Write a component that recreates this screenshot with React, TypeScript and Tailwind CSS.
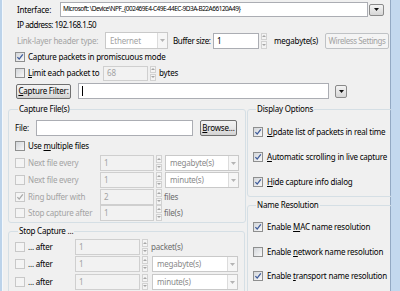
import type { ReactNode } from "react"

function Check({ checked, disabled }: { checked?: boolean; disabled?: boolean }) {
  return (
    <span
      className={`w-[10px] h-[10px] shrink-0 border flex items-center justify-center ${
        disabled
          ? "border-[#c8c8c8] bg-[#f4f4f4]"
          : "border-[#8e8f8f] bg-gradient-to-br from-[#d3d6da] to-[#f8f8f8]"
      }`}
    >
      {checked && (
        <svg width="8" height="8" viewBox="0 0 8 8">
          <path
            d="M1.4 4.1 L3.2 6.1 L6.8 1.3"
            fill="none"
            stroke={disabled ? "#a9a9a9" : "#3d5b9b"}
            strokeWidth="1.3"
          />
        </svg>
      )}
    </span>
  )
}

function CheckRow({
  checked,
  disabled,
  children,
  gap = "gap-[3px]",
}: {
  checked?: boolean
  disabled?: boolean
  children: ReactNode
  gap?: string
}) {
  return (
    <span className={`flex items-center ${gap} ${disabled ? "text-[#a3a3a3]" : ""}`}>
      <Check checked={checked} disabled={disabled} />
      <span className="whitespace-nowrap">{children}</span>
    </span>
  )
}

function U({ children }: { children: ReactNode }) {
  return <span className="underline underline-offset-[1px]">{children}</span>
}

function Arrows() {
  return (
    <span className="ml-[2px] w-[6px] h-full flex flex-col gap-[1px]">
      <span className="flex-1 border border-[#d2d2d2] bg-[#f4f4f4] flex items-center justify-center">
        <svg width="4" height="2" viewBox="0 0 4 2">
          <path d="M0 2 L2 0 L4 2Z" fill="#a6a6a6" />
        </svg>
      </span>
      <span className="flex-1 border border-[#d2d2d2] bg-[#f4f4f4] flex items-center justify-center">
        <svg width="4" height="2" viewBox="0 0 4 2">
          <path d="M0 0 L2 2 L4 0Z" fill="#a6a6a6" />
        </svg>
      </span>
    </span>
  )
}

function Spin({
  value,
  disabled,
  w,
}: {
  value: string
  disabled?: boolean
  w: string
}) {
  return (
    <span className="flex h-full items-stretch">
      <span
        className={`${w} h-full border pl-[3px] flex items-center ${
          disabled
            ? "border-[#cfcfcf] bg-[#f2f2f2] text-[#a3a3a3]"
            : "border-[#abadb3] bg-white"
        }`}
      >
        {value}
      </span>
      <Arrows />
    </span>
  )
}

function Combo({ value, w, disabled }: { value: string; w: string; disabled?: boolean }) {
  return (
    <span
      className={`${w} h-full border border-[#c9c9c9] bg-white flex items-stretch ${
        disabled ? "text-[#a3a3a3]" : "text-[#8a8a8a]"
      }`}
    >
      <span className="flex-1 pl-[4px] flex items-center whitespace-nowrap">{value}</span>
      <span className="w-[10px] border-l border-[#dcdcdc] bg-[#f6f6f6] flex items-center justify-center">
        <svg width="5" height="3" viewBox="0 0 5 3">
          <path d="M0 0 L2.5 3 L5 0Z" fill="#b4b4b4" />
        </svg>
      </span>
    </span>
  )
}

function DropButton({ className }: { className: string }) {
  return (
    <span
      className={`${className} border border-[#8a8a8a] rounded-[2px] bg-gradient-to-b from-[#f4f4f4] to-[#d6d6d6] flex items-center justify-center`}
    >
      <svg width="5" height="3" viewBox="0 0 5 3">
        <path d="M0 0 L2.5 3 L5 0Z" fill="#111" />
      </svg>
    </span>
  )
}

function Button({ children, className }: { children: ReactNode; className: string }) {
  return (
    <span
      className={`${className} border border-[#707070] rounded-[2px] bg-gradient-to-b from-[#f3f3f3] via-[#e8e8e8] to-[#d2d2d2] flex items-center justify-center whitespace-nowrap`}
    >
      {children}
    </span>
  )
}

function Group({
  title,
  className,
  children,
}: {
  title: string
  className: string
  children: ReactNode
}) {
  return (
    <fieldset className={`${className} border border-[#d5dfe5] rounded-[3px] shrink-0`}>
      <legend className="ml-[3px] px-[1px] leading-[12px] h-[12px]">{title}</legend>
      {children}
    </fieldset>
  )
}

export default function App() {
  return (
    <div className="w-[400px] h-[291px] overflow-hidden flex bg-[#c3d8ee] font-['Noto_Sans',sans-serif] text-[8px] tracking-[-0.2px] text-black leading-none">
      <div className="w-[3px] shrink-0 bg-[#bcd3ea] border-r border-[#f4f8fc]" />

      <div className="w-[388px] shrink-0 bg-[#f0f0f0] border-r border-[#93a9c3]">
        {/* Interface */}
        <div className="mt-[2px] h-[15px] flex items-center pl-[14px]">
          <span className="w-[43px]">Interface:</span>
          <span className="w-[308px] h-full border border-[#abadb3] bg-white pl-[2px] flex items-center whitespace-nowrap overflow-hidden text-[6.5px] tracking-[-0.5px]">
            Microsoft: \Device\NPF_{"{"}002469E4-C49E-44EC-9D3A-B22A66120A49{"}"}
          </span>
          <DropButton className="ml-[1px] w-[15px] h-[12px]" />
        </div>

        <div className="h-[15px] flex items-center pl-[14px] tracking-[-0.5px]">
          IP address: 192.168.1.50
        </div>

        {/* Link-layer / buffer */}
        <div className="h-[17px] flex items-center pl-[14px]">
          <span className="w-[88px] text-[#a3a3a3] whitespace-nowrap">Link-layer header type:</span>
          <span className="h-[17px]">
            <Combo value="Ethernet" w="w-[63px]" disabled />
          </span>
          <span className="ml-[5px] w-[40px] whitespace-nowrap tracking-[-0.35px]">Buffer size:</span>
          <span className="h-[16px]">
            <Spin value="1" w="w-[46px]" />
          </span>
          <span className="ml-[7px] w-[51px] whitespace-nowrap">megabyte(s)</span>
          <span className="w-[64px] h-[16px] border border-[#bfc2c5] rounded-[2px] bg-[#f4f4f4] text-[#a3a3a3] flex items-center justify-center whitespace-nowrap tracking-[-0.4px]">
            Wireless Settings
          </span>
        </div>

        <div className="h-[16px] flex items-center pl-[12px]">
          <CheckRow checked>Capture packets in promiscuous mode</CheckRow>
        </div>

        <div className="h-[16px] flex items-center pl-[12px]">
          <span className="w-[88px]">
            <CheckRow>
              <U>L</U>imit each packet to
            </CheckRow>
          </span>
          <span className="h-[15px]">
            <Spin value="68" w="w-[45px]" disabled />
          </span>
          <span className="ml-[3px]">bytes</span>
        </div>

        {/* Capture filter */}
        <div className="mt-[2px] h-[16px] flex items-center pl-[13px]">
          <Button className="w-[55px] h-[15px]">
            <U>C</U>apture Filter:
          </Button>
          <span className="ml-[7px] w-[251px] h-full border border-[#abadb3] bg-white flex items-center pl-[3px]">
            <span className="w-px h-[10px] bg-black" />
          </span>
          <DropButton className="ml-[6px] w-[12px] h-[13px]" />
        </div>

        {/* Groups */}
        <div className="mt-[4px] pl-[5px] flex gap-[4px]">
          <div className="w-[235px] flex flex-col">
            <Group title="Capture File(s)" className="h-[120px] px-[6px]">
              <div className="mt-[5px] h-[16px] flex items-center">
                <span className="w-[21px]">File:</span>
                <span className="w-[157px] h-full border border-[#abadb3] bg-white" />
                <Button className="ml-[7px] w-[37px] h-[16px]">
                  <U>B</U>rowse...
                </Button>
              </div>
              <div className="mt-[2px] h-[16px] flex items-center">
                <CheckRow>
                  Use <U>m</U>ultiple files
                </CheckRow>
              </div>
              <div className="mt-[1px] h-[16px] flex items-center">
                <span className="w-[85px]">
                  <CheckRow disabled>Next file every</CheckRow>
                </span>
                <Spin value="1" w="w-[54px]" disabled />
                <span className="ml-[3px] h-full">
                  <Combo value="megabyte(s)" w="w-[74px]" />
                </span>
              </div>
              <div className="mt-[1px] h-[16px] flex items-center">
                <span className="w-[85px]">
                  <CheckRow disabled>Next file every</CheckRow>
                </span>
                <Spin value="1" w="w-[54px]" disabled />
                <span className="ml-[3px] h-full">
                  <Combo value="minute(s)" w="w-[74px]" />
                </span>
              </div>
              <div className="mt-[1px] h-[16px] flex items-center">
                <span className="w-[85px]">
                  <CheckRow checked disabled>
                    Ring buffer with
                  </CheckRow>
                </span>
                <Spin value="2" w="w-[54px]" disabled />
                <span className="ml-[2px] text-[#6d6d6d]">files</span>
              </div>
              <div className="h-[16px] flex items-center">
                <span className="w-[85px]">
                  <CheckRow disabled>Stop capture after</CheckRow>
                </span>
                <Spin value="1" w="w-[54px]" disabled />
                <span className="ml-[2px] text-[#6d6d6d]">file(s)</span>
              </div>
            </Group>

            <Group title="Stop Capture ..." className="mt-[2px] h-[90px] px-[6px]">
              <div className="mt-[2px] h-[16px] flex items-center">
                <span className="w-[60px]">
                  <CheckRow disabled>
                    <span className="text-black">... after</span>
                  </CheckRow>
                </span>
                <Spin value="1" w="w-[65px]" disabled />
                <span className="ml-[3px] text-[#6d6d6d]">packet(s)</span>
              </div>
              <div className="mt-[1px] h-[16px] flex items-center">
                <span className="w-[60px]">
                  <CheckRow disabled>
                    <span className="text-black">... after</span>
                  </CheckRow>
                </span>
                <Spin value="1" w="w-[65px]" disabled />
                <span className="ml-[4px] h-full">
                  <Combo value="megabyte(s)" w="w-[86px]" />
                </span>
              </div>
              <div className="mt-[2px] h-[16px] flex items-center">
                <span className="w-[60px]">
                  <CheckRow disabled>
                    <span className="text-black">... after</span>
                  </CheckRow>
                </span>
                <Spin value="1" w="w-[65px]" disabled />
                <span className="ml-[4px] h-full">
                  <Combo value="minute(s)" w="w-[86px]" />
                </span>
              </div>
            </Group>
          </div>

          <div className="w-[143px] flex flex-col">
            <Group title="Display Options" className="h-[94px] px-[5px]">
              <div className="mt-[9px] h-[16px] flex items-center">
                <CheckRow checked gap="gap-[4px]">
                  <U>U</U>pdate list of packets in real time
                </CheckRow>
              </div>
              <div className="mt-[9px] h-[16px] flex items-center">
                <CheckRow checked gap="gap-[4px]">
                  <U>A</U>utomatic scrolling in live capture
                </CheckRow>
              </div>
              <div className="mt-[9px] h-[16px] flex items-center">
                <CheckRow checked gap="gap-[4px]">
                  <U>H</U>ide capture info dialog
                </CheckRow>
              </div>
            </Group>

            <Group title="Name Resolution" className="mt-[2px] h-[100px] px-[5px]">
              <div className="mt-[8px] h-[16px] flex items-center">
                <CheckRow checked gap="gap-[4px]">
                  Enable <U>M</U>AC name resolution
                </CheckRow>
              </div>
              <div className="mt-[9px] h-[16px] flex items-center">
                <CheckRow gap="gap-[4px]">
                  Enable <U>n</U>etwork name resolution
                </CheckRow>
              </div>
              <div className="mt-[8px] h-[16px] flex items-center">
                <CheckRow checked gap="gap-[4px]">
                  Enable <U>t</U>ransport name resolution
                </CheckRow>
              </div>
            </Group>
          </div>
        </div>
      </div>

      <div className="flex-1 bg-[#c3d8ee]" />
    </div>
  )
}
